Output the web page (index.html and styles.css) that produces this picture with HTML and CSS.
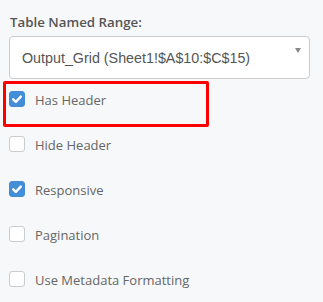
FILE: index.html
```html
<!DOCTYPE html>
<html lang="en">
<head>
  <meta charset="UTF-8">
  <meta name="viewport" content="width=device-width, initial-scale=1.0">
  <title>Table Settings</title>
  <link rel="stylesheet" href="styles.css">
</head>
<body>

<div class="panel">
  <div class="field-label">Table Named Range:</div>
  <div class="select-box">
    <span class="select-value">Output_Grid (Sheet1!$A$10:$C$15)</span>
    <span class="select-arrow"></span>
  </div>

  <ul class="options">
    <li class="option highlighted">
      <span class="check checked"><svg viewBox="0 0 16 16" width="16" height="16"><path d="M4.2 8.3 L6.8 10.8 L11.8 5.6" fill="none" stroke="#fff" stroke-width="2.4" stroke-linecap="round" stroke-linejoin="round"/></svg></span>
      <span class="option-text">Has Header</span>
    </li>
    <li class="option">
      <span class="check"></span>
      <span class="option-text">Hide Header</span>
    </li>
    <li class="option">
      <span class="check checked"><svg viewBox="0 0 16 16" width="16" height="16"><path d="M4.2 8.3 L6.8 10.8 L11.8 5.6" fill="none" stroke="#fff" stroke-width="2.4" stroke-linecap="round" stroke-linejoin="round"/></svg></span>
      <span class="option-text">Responsive</span>
    </li>
    <li class="option">
      <span class="check"></span>
      <span class="option-text">Pagination</span>
    </li>
    <li class="option">
      <span class="check"></span>
      <span class="option-text">Use Metadata Formatting</span>
    </li>
  </ul>
</div>

</body>
</html>
```

FILE: styles.css
```css
body {
  margin: 0;
  background-color: #f7f8fa;
  font-family: 'Open Sans', sans-serif;
}

.panel {
  padding: 13px 13px 0 9px;
}

.field-label {
  font-size: 13.3px;
  font-weight: 600;
  color: #555;
  line-height: 18px;
  padding-left: 1px;
  margin-bottom: 5px;
}

.select-box {
  position: relative;
  width: 299px;
  height: 41px;
  border: 1px solid #ccc;
  border-radius: 4px;
  background-color: #fff;
  display: flex;
  align-items: center;
}

.select-value {
  font-family: 'Liberation Sans', Arial, sans-serif;
  font-size: 14.3px;
  color: #555;
  padding-left: 12px;
}

.select-arrow {
  position: absolute;
  right: 8px;
  top: 11px;
  width: 0;
  height: 0;
  border-left: 3px solid transparent;
  border-right: 3px solid transparent;
  border-top: 5px solid #888;
}

.options {
  list-style-type: none;
  margin: 4px 0 0 0;
  padding: 0;
}

.option {
  position: relative;
  display: flex;
  align-items: center;
  height: 45px;
}

.option.highlighted::after {
  content: '';
  position: absolute;
  left: -6px;
  top: -2px;
  width: 200px;
  height: 40px;
  border: 3px solid #ff0000;
  border-radius: 2px;
}

.check {
  width: 14px;
  height: 14px;
  border: 1px solid #ccc;
  border-radius: 3px;
  background-color: #fff;
  margin-top: -13px;
  flex-shrink: 0;
  position: relative;
}

.check.checked {
  background-color: #448ed8;
  border-color: #448ed8;
}

.check svg {
  position: absolute;
  left: -1px;
  top: -1px;
}

.option-text {
  font-size: 13px;
  color: #666;
  margin-left: 10px;
  margin-top: -12px;
}
```
